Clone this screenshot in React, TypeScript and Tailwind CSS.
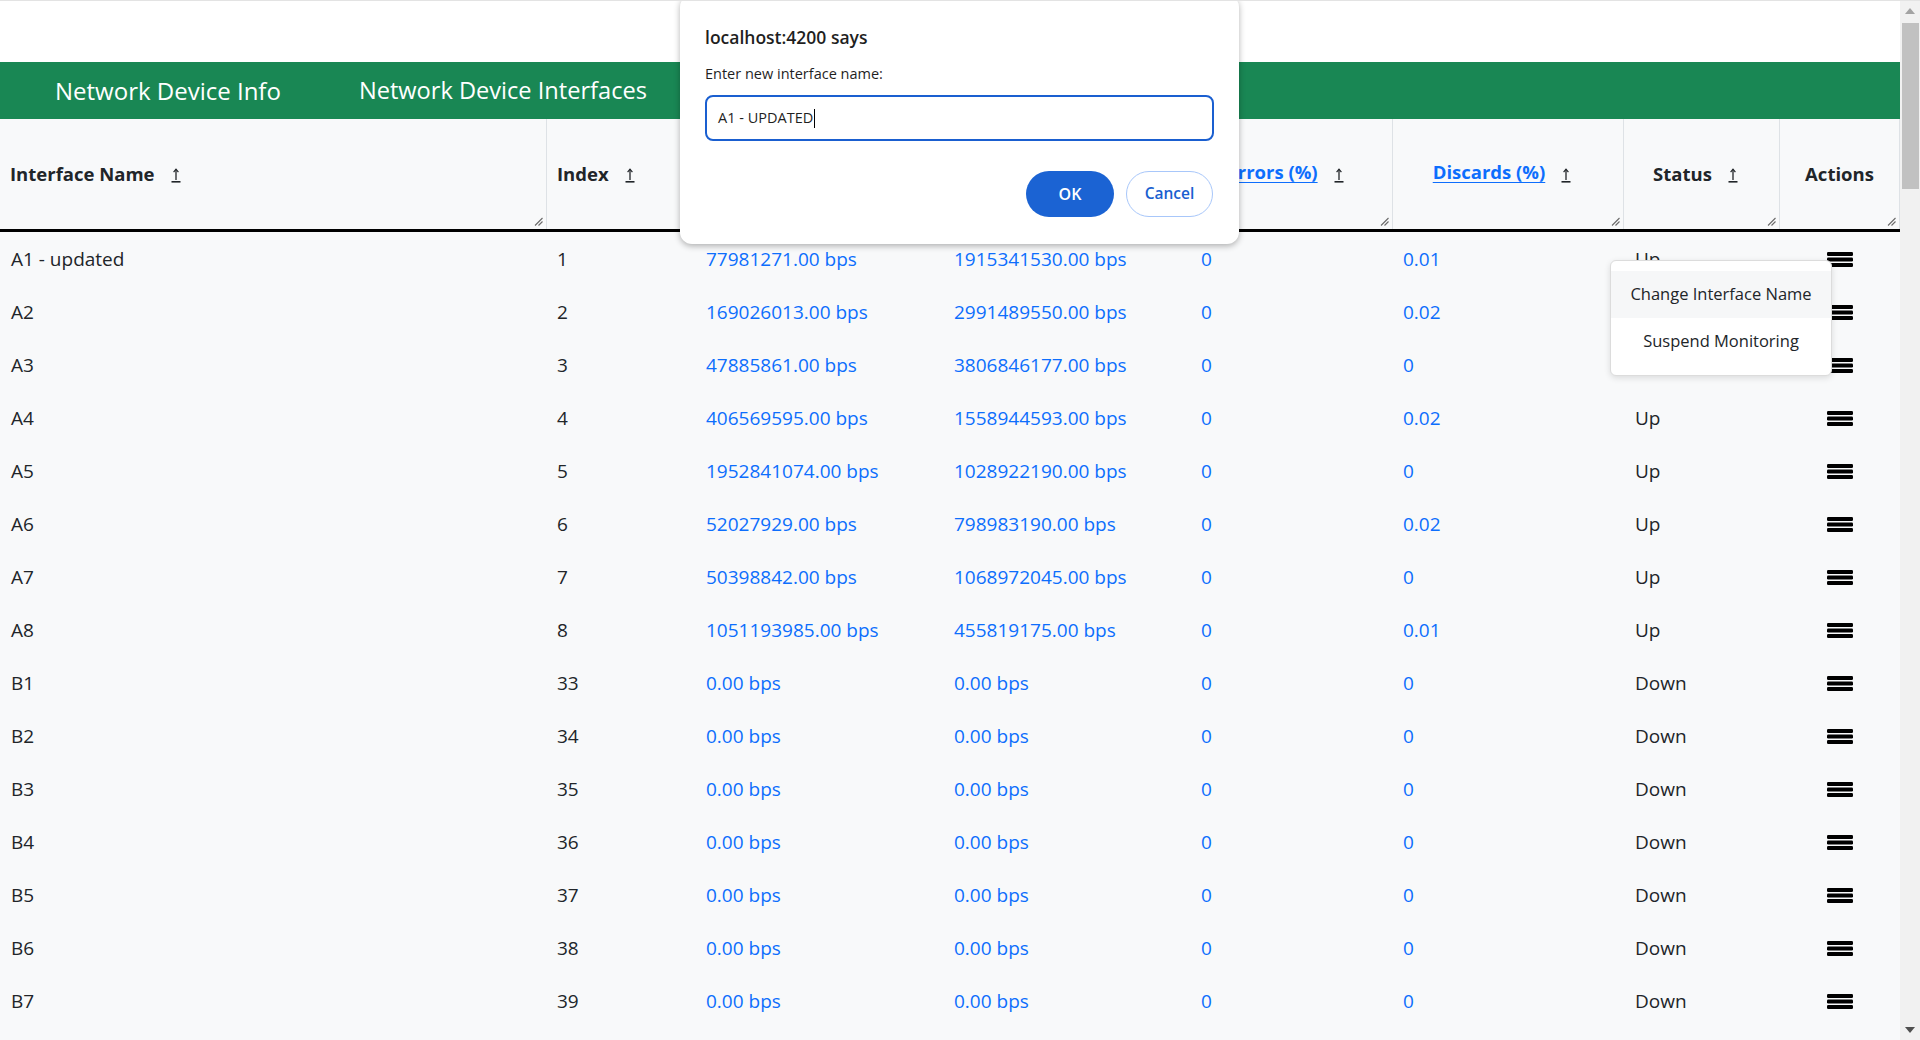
import React from 'react';

interface InterfaceRow {
  name: string;
  index: number;
  inRate: string;
  outRate: string;
  errors: string;
  discards: string;
  status: string;
}

const rows: InterfaceRow[] = [
  { name: 'A1 - updated', index: 1, inRate: '77981271.00 bps', outRate: '1915341530.00 bps', errors: '0', discards: '0.01', status: 'Up' },
  { name: 'A2', index: 2, inRate: '169026013.00 bps', outRate: '2991489550.00 bps', errors: '0', discards: '0.02', status: 'Up' },
  { name: 'A3', index: 3, inRate: '47885861.00 bps', outRate: '3806846177.00 bps', errors: '0', discards: '0', status: 'Up' },
  { name: 'A4', index: 4, inRate: '406569595.00 bps', outRate: '1558944593.00 bps', errors: '0', discards: '0.02', status: 'Up' },
  { name: 'A5', index: 5, inRate: '1952841074.00 bps', outRate: '1028922190.00 bps', errors: '0', discards: '0', status: 'Up' },
  { name: 'A6', index: 6, inRate: '52027929.00 bps', outRate: '798983190.00 bps', errors: '0', discards: '0.02', status: 'Up' },
  { name: 'A7', index: 7, inRate: '50398842.00 bps', outRate: '1068972045.00 bps', errors: '0', discards: '0', status: 'Up' },
  { name: 'A8', index: 8, inRate: '1051193985.00 bps', outRate: '455819175.00 bps', errors: '0', discards: '0.01', status: 'Up' },
  { name: 'B1', index: 33, inRate: '0.00 bps', outRate: '0.00 bps', errors: '0', discards: '0', status: 'Down' },
  { name: 'B2', index: 34, inRate: '0.00 bps', outRate: '0.00 bps', errors: '0', discards: '0', status: 'Down' },
  { name: 'B3', index: 35, inRate: '0.00 bps', outRate: '0.00 bps', errors: '0', discards: '0', status: 'Down' },
  { name: 'B4', index: 36, inRate: '0.00 bps', outRate: '0.00 bps', errors: '0', discards: '0', status: 'Down' },
  { name: 'B5', index: 37, inRate: '0.00 bps', outRate: '0.00 bps', errors: '0', discards: '0', status: 'Down' },
  { name: 'B6', index: 38, inRate: '0.00 bps', outRate: '0.00 bps', errors: '0', discards: '0', status: 'Down' },
  { name: 'B7', index: 39, inRate: '0.00 bps', outRate: '0.00 bps', errors: '0', discards: '0', status: 'Down' },
];

const cols = 'grid grid-cols-[547px_149px_248px_247px_202px_231px_156px_120px]';

const SortArrow = () => (
  <svg width="10" height="16" viewBox="0 0 10 16" className="shrink-0">
    <path d="M5 2.5V13" stroke="#212529" strokeWidth="1.3" />
    <path d="M2.6 5.2L5 2.2L7.4 5.2" stroke="#212529" strokeWidth="1.2" fill="none" />
    <rect x="0.5" y="14" width="9" height="1.6" fill="#212529" />
  </svg>
);

const Grip = () => (
  <svg width="9" height="9" viewBox="0 0 9 9" className="absolute right-[3px] bottom-[3px]">
    <path d="M8.5 1L1 8.5M8.5 4.5L4.5 8.5" stroke="#6b6b6b" strokeWidth="1.1" />
  </svg>
);

const Bars = () => (
  <svg width="26" height="15" viewBox="0 0 26 15">
    <rect x="0" y="0" width="26" height="4" rx="1.2" fill="#000" />
    <rect x="0" y="5.5" width="26" height="4" rx="1.2" fill="#000" />
    <rect x="0" y="11" width="26" height="4" rx="1.2" fill="#000" />
  </svg>
);

const HeaderCell = ({
  label,
  link,
  center,
  sort = true,
}: {
  label: string;
  link?: boolean;
  center?: boolean;
  sort?: boolean;
}) => (
  <div
    className={`relative flex items-center border-r border-[#dee2e6] ${
      center ? (sort ? 'justify-center pr-[12px]' : 'justify-center') : 'pl-[10px]'
    }`}
  >
    <span
      className={
        link
          ? 'font-bold text-[#0d6efd] underline underline-offset-[3px] -mt-[4px]'
          : 'font-bold text-[#212529]'
      }
    >
      {label}
    </span>
    {sort && (
      <span className="ml-[16px] mt-[2px]">
        <SortArrow />
      </span>
    )}
    <Grip />
  </div>
);

export default function App() {
  return (
    <div
      className="flex h-[1040px] w-full overflow-hidden border-t border-[#e3e3e3] bg-white text-[19px]"
      style={{ fontFamily: '"Open Sans", "Noto Sans", sans-serif' }}
    >
      <div className="relative flex w-[1900px] flex-col overflow-hidden">
        {/* empty top area */}
        <div className="h-[61px] shrink-0 bg-white" />

        {/* Green tabs bar */}
        <nav className="flex h-[57px] shrink-0 items-center bg-[#198754] pl-[55px] text-[24px] text-white">
          <span>Network Device Info</span>
          <span className="ml-[78px] text-[23.6px]">Network Device Interfaces</span>
        </nav>

        {/* Table */}
        <div className="flex-1 shrink-0 bg-[#f8f9fa]">
          <div className={`${cols} h-[113px] border-b-[3px] border-black text-[18.5px]`}>
            <HeaderCell label="Interface Name" />
            <HeaderCell label="Index" />
            <HeaderCell label="In Rate" link center />
            <HeaderCell label="Out Rate" link center />
            <HeaderCell label="Errors (%)" link center />
            <HeaderCell label="Discards (%)" link center />
            <HeaderCell label="Status" center />
            <HeaderCell label="Actions" center sort={false} />
          </div>

          {rows.map((r) => (
            <div key={r.name} className={`${cols} h-[53px] items-center text-[#212529]`}>
              <div className="pl-[11px] pt-[1px]">{r.name}</div>
              <div className="pl-[10px] pt-[1px]">{r.index}</div>
              <div className="pl-[10px] pt-[1px] text-[#0d6efd]">{r.inRate}</div>
              <div className="pl-[10px] pt-[1px] text-[#0d6efd]">{r.outRate}</div>
              <div className="pl-[10px] pt-[1px] text-[#0d6efd]">{r.errors}</div>
              <div className="pl-[10px] pt-[1px] text-[#0d6efd]">{r.discards}</div>
              <div className="pl-[11px] pt-[1px]">{r.status}</div>
              <div className="flex justify-center pr-[1px] pt-[2px]">
                <Bars />
              </div>
            </div>
          ))}
        </div>

        {/* Row action menu */}
        <div className="absolute left-[1610px] top-[259px] w-[222px] rounded-[6px] border border-[#dcdcdc] bg-white py-[10px] text-[16.5px] text-[#212529] shadow-[0_2px_6px_rgba(0,0,0,0.12)]">
          <div className="flex h-[47px] items-center justify-center bg-[#f6f7f8]">Change Interface Name</div>
          <div className="flex h-[47px] items-center justify-center">Suspend Monitoring</div>
        </div>

        {/* Browser prompt dialog */}
        <div className="absolute left-[680px] top-[-6px] h-[249px] w-[559px] rounded-[12px] bg-white px-[25px] pt-[30px] text-[#1f1f1f] shadow-[0_2px_6px_rgba(0,0,0,0.3)]">
          <div className="text-[17.5px] font-semibold leading-[24px]">localhost:4200 says</div>
          <div className="mt-[15px] text-[14.5px] leading-[20px]">Enter new interface name:</div>
          <div className="mt-[11px] flex h-[46px] items-center rounded-[8px] border-2 border-[#1a5fd0] px-[11px] text-[14.5px]">
            <span>A1 - UPDATED</span>
            <span className="ml-[1px] h-[19px] w-px bg-black" />
          </div>
          <div className="mt-[30px] flex justify-end gap-[12px] pr-[1px]">
            <button className="h-[46px] w-[88px] rounded-full bg-[#1b63d3] text-[16px] font-semibold text-white">
              OK
            </button>
            <button className="h-[46px] w-[87px] rounded-full border border-[#a8c7fa] bg-white text-[15.5px] font-semibold text-[#1a5fd0]">
              Cancel
            </button>
          </div>
        </div>
      </div>

      {/* Fake scrollbar */}
      <div className="flex w-[20px] flex-col items-center bg-[#f1f1f1]">
        <div className="flex h-[20px] items-center justify-center">
          <svg width="10" height="6" viewBox="0 0 10 6">
            <path d="M0 6L5 0L10 6Z" fill="#a3a3a3" />
          </svg>
        </div>
        <div className="mt-[2px] h-[166px] w-[17px] bg-[#c1c1c1]" />
        <div className="flex-1" />
        <div className="flex h-[20px] items-center justify-center">
          <svg width="10" height="6" viewBox="0 0 10 6">
            <path d="M0 0L5 6L10 0Z" fill="#505050" />
          </svg>
        </div>
      </div>
    </div>
  );
}
